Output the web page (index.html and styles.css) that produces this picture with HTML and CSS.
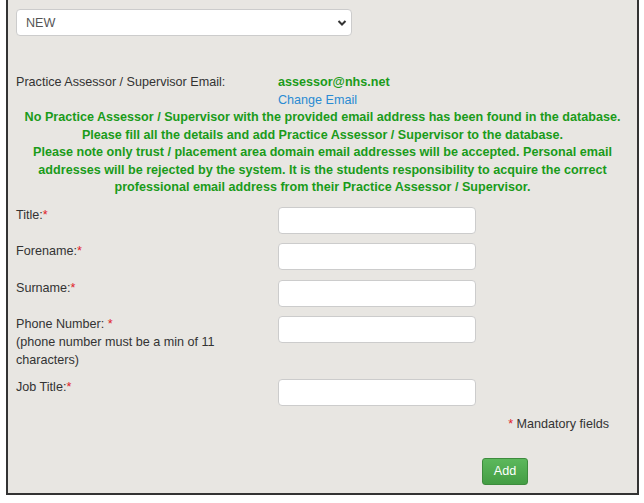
FILE: index.html
```html
<!DOCTYPE html>
<html lang="en">
<head>
    <meta charset="UTF-8">
    <title>Add Practice Assessor</title>
    <link rel="stylesheet" href="styles.css">
</head>
<body>
    <div class="panel">
        <div class="select-wrap">
            <select class="status-select">
                <option>NEW</option>
            </select>
            <svg class="chevron" width="10" height="8" viewBox="0 0 10 8"><path d="M1.5 2 L5 5.5 L8.5 2" fill="none" stroke="#333" stroke-width="2"/></svg>
        </div>

        <div class="email-row">
            <div class="label">Practice Assessor / Supervisor Email:</div>
            <div>
                <div class="email-value">assessor@nhs.net</div>
                <a href="#" class="change-link">Change Email</a>
            </div>
        </div>

        <p class="notice">
            No Practice Assessor / Supervisor with the provided email address has been found in the database.<br>
            Please fill all the details and add Practice Assessor / Supervisor to the database.<br>
            Please note only trust / placement area domain email addresses will be accepted. Personal email addresses will be rejected by the system. It is the students responsibility to acquire the correct professional email address from their Practice Assessor / Supervisor.
        </p>

        <div class="form">
            <label class="label">Title:<span class="req">*</span></label>
            <input type="text" class="field">

            <label class="label">Forename:<span class="req">*</span></label>
            <input type="text" class="field">

            <label class="label">Surname:<span class="req">*</span></label>
            <input type="text" class="field">

            <label class="label">Phone Number: <span class="req">*</span><br>(phone number must be a min of 11 characters)</label>
            <input type="text" class="field">

            <label class="label">Job Title:<span class="req">*</span></label>
            <input type="text" class="field">
        </div>

        <p class="mandatory"><span class="req">*</span> Mandatory fields</p>

        <div class="actions">
            <button class="btn-add">Add</button>
        </div>
    </div>
</body>
</html>
```

FILE: styles.css
```css
body {
    margin: 0;
    background-color: #fff;
    font-family: "Liberation Sans", Arial, sans-serif;
    font-size: 12.6px;
    color: #333;
}
.panel {
    margin: 0 5px 6px 6px;
    padding: 9px 8px 8px 8px;
    background-color: #e8e6e2;
    border: 2px solid #333;
    border-top: none;
}
.select-wrap {
    position: relative;
    width: 336px;
}
.status-select {
    display: block;
    width: 100%;
    height: 27px;
    padding: 0 9px;
    border: 1px solid #ccc;
    border-radius: 4px;
    background-color: #fff;
    font-family: inherit;
    font-size: 12.6px;
    color: #555;
    appearance: none;
    -webkit-appearance: none;
}
.chevron {
    position: absolute;
    right: 5px;
    top: 10px;
}
.email-row {
    display: grid;
    grid-template-columns: 262px 1fr;
    margin-top: 37px;
    line-height: 18px;
}
.email-value {
    color: #1a9b1a;
    font-weight: bold;
}
.change-link {
    color: #2a8bd2;
    text-decoration: none;
}
.notice {
    margin: 0;
    color: #1a9b1a;
    font-weight: bold;
    text-align: center;
    line-height: 17.6px;
}
.form {
    display: grid;
    grid-template-columns: 262px 198px;
    row-gap: 9.5px;
    margin-top: 10px;
    line-height: 18px;
}
.form .label {
    padding-right: 40px;
    margin-top: -1px;
}
.req {
    color: #e0202a;
}
.field {
    box-sizing: border-box;
    width: 198px;
    height: 27px;
    border: 1px solid #ccc;
    border-radius: 4px;
    background-color: #fff;
}
.mandatory {
    margin: 9px 20px 0 0;
    text-align: right;
    line-height: 18px;
}
.actions {
    margin-top: 25px;
    padding-left: 466px;
}
.btn-add {
    width: 46px;
    height: 27px;
    border: 1px solid #3d8b3d;
    border-radius: 3px;
    background: linear-gradient(#5cb85c, #449d44);
    color: #fff;
    font-family: inherit;
    font-size: 12.6px;
}
```
